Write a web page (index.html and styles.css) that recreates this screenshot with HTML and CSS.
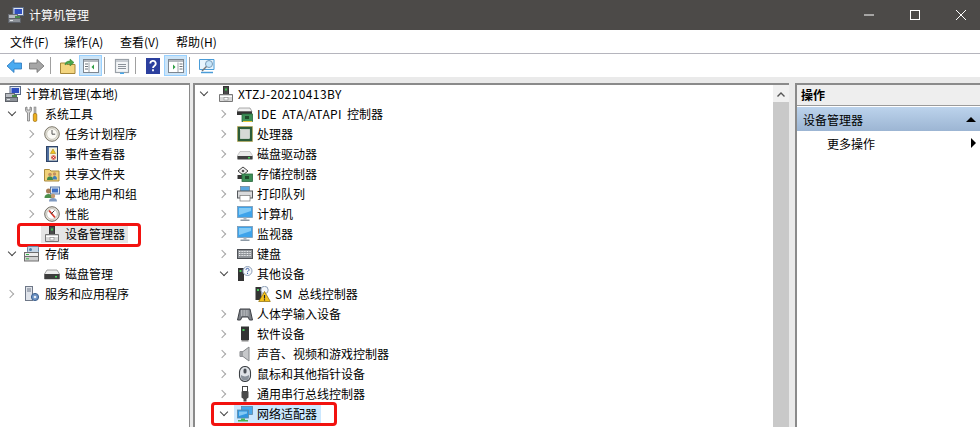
FILE: index.html
```html
<!DOCTYPE html>
<html lang="zh-CN">
<head>
<meta charset="utf-8">
<title>计算机管理</title>
<link rel="stylesheet" href="styles.css">
</head>
<body>
<svg class="sprites" xmlns="http://www.w3.org/2000/svg">
  <symbol id="i-mgmt" viewBox="0 0 16 16"><rect x="5" y="0.500" width="10.500" height="8" fill="#dfe6f2" stroke="#5a6a85"/><rect x="6.500" y="2" width="7.500" height="5" fill="#2f4fc0"/><rect x="0.500" y="7.500" width="9" height="4" fill="#b8bcc2" stroke="#6a6e75"/><rect x="0.500" y="11.500" width="12" height="4" fill="#8d9299" stroke="#5d6168"/><rect x="2" y="13" width="3" height="1" fill="#dfe2e6"/><rect x="7" y="9" width="5" height="2" fill="#4b8a4b"/></symbol>
  <symbol id="i-tools" viewBox="0 0 16 16"><path d="M1.500 1.500v2.500a3 3 0 0 0 2 2.700V15h2V6.700a3 3 0 0 0 2-2.700V1.500L6 1v3H3V1z" fill="#d5d5d5" stroke="#6c6c6c" stroke-width=".7"/><rect x="10" y="1" width="2" height="7" fill="#b9b9b9" stroke="#777" stroke-width=".5"/><rect x="9.300" y="7.500" width="3.500" height="8" rx="1.400" fill="#eeb01e" stroke="#9a6a08" stroke-width=".7"/></symbol>
  <symbol id="i-clock" viewBox="0 0 16 16"><circle cx="8" cy="8" r="7.300" fill="#e4e2da" stroke="#7b7668"/><circle cx="8" cy="8" r="5.300" fill="#fbfaf5" stroke="#b9b5a6" stroke-width=".6"/><path d="M8 4v4.200h3.200" fill="none" stroke="#555" stroke-width="1"/></symbol>
  <symbol id="i-event" viewBox="0 0 16 16"><rect x="2.500" y="0.500" width="11" height="15" fill="#4f6f9f" stroke="#2e4468"/><rect x="5" y="1.500" width="8" height="13" fill="#f4f1dd"/><path d="M9 3l2.600 4.500H6.400z" fill="#f1c21c" stroke="#a07c08" stroke-width=".5"/><circle cx="9.500" cy="11.500" r="2.300" fill="#d2453a"/><path d="M8.500 10.500l2 2m0-2l-2 2" stroke="#fff" stroke-width=".7"/></symbol>
  <symbol id="i-share" viewBox="0 0 16 16"><path d="M0.500 3.500h5l1.500 1.500h8v10h-14.500z" fill="#f1d27a" stroke="#a98a3c"/><circle cx="6" cy="8.500" r="1.800" fill="#c08f63"/><path d="M3 14c0-3 1.300-3.500 3-3.500s3 .5 3 3.500z" fill="#3f8a49"/><circle cx="10.500" cy="8" r="1.700" fill="#c08f63"/><path d="M8.500 13.500c0-3 .8-3.500 2-3.500s2.500.5 2.500 3.500z" fill="#3f7fb8"/></symbol>
  <symbol id="i-users" viewBox="0 0 16 16"><rect x="6.500" y="1" width="9" height="7" fill="#dbe6f5" stroke="#5d7aa8"/><rect x="8" y="2.500" width="6" height="4" fill="#3f6fc4"/><circle cx="4.500" cy="5" r="2.500" fill="#a77b55"/><path d="M0.500 12c0-3 1.800-4 4-4s4 1 4 4z" fill="#4c8f4c"/><circle cx="9" cy="10" r="2.200" fill="#c49a72"/><path d="M5 15.500c0-2.700 1.800-3.500 4-3.500s4 .8 4 3.500z" fill="#7f99bf"/></symbol>
  <symbol id="i-perf" viewBox="0 0 16 16"><circle cx="8" cy="8" r="7.300" fill="#e5e3dc" stroke="#6f6b62"/><circle cx="8" cy="8" r="5.300" fill="#fff" stroke="#a9a69c" stroke-width=".6"/><path d="M5 4.500L11 11.500" stroke="#d43c2d" stroke-width="1.800"/><path d="M10.500 4.500L7 8" stroke="#444" stroke-width="1"/></symbol>
  <symbol id="i-dev" viewBox="0 0 16 16"><rect x="5.500" y="0.500" width="5" height="8" fill="#4a4a4a" stroke="#333"/><rect x="7" y="2.500" width="2" height="2" fill="#3ac34a"/><path d="M1.500 8.500h13v7h-13z" fill="#d9d9d9" stroke="#777"/><path d="M2 10.500h12" stroke="#fff"/><rect x="6" y="11.500" width="4" height="2.500" fill="#fff" stroke="#888" stroke-width=".6"/></symbol>
  <symbol id="i-store" viewBox="0 0 16 16"><rect x="3.500" y="0.500" width="11" height="6" rx="1" fill="#c6d6e6" stroke="#6888a6"/><circle cx="6.500" cy="3.500" r="1.500" fill="#4d7ea8"/><rect x="0.500" y="6.500" width="14" height="4" fill="#ececec" stroke="#6f6f6f"/><rect x="2" y="8" width="3" height="1" fill="#39b54a"/><rect x="0.500" y="10.500" width="14" height="4.500" fill="#d1d1d1" stroke="#6f6f6f"/><rect x="2" y="12.300" width="3" height="1" fill="#39b54a"/></symbol>
  <symbol id="i-disk" viewBox="0 0 16 16"><path d="M3 4h10l2.500 4v5h-15V8z" fill="#ededed" stroke="#8b8b8b" stroke-width=".8"/><rect x="0.500" y="8" width="15" height="5" fill="#3d3d3d"/><rect x="11" y="10" width="2" height="1.500" fill="#47d35a"/></symbol>
  <symbol id="i-svc" viewBox="0 0 16 16"><rect x="1.500" y="0.500" width="7" height="14" fill="#dfe3ea" stroke="#6f7888"/><path d="M3 3h4M3 5h4" stroke="#6f7888"/><circle cx="11" cy="11" r="3.600" fill="#6e93c4" stroke="#3f628f"/><circle cx="11" cy="11" r="1.300" fill="#e8eef6"/></symbol>
  <symbol id="i-ide" viewBox="0 0 16 16"><path d="M2 2h11l2 3.500H0z" fill="#efefef" stroke="#888" stroke-width=".7"/><rect x="0" y="5.500" width="15" height="3.500" fill="#333"/><rect x="5" y="8" width="10.500" height="7.500" fill="#3d8f57" stroke="#2a6a3f" stroke-width=".8"/><rect x="8" y="10" width="4" height="3" fill="#1e4b2c"/><path d="M6 15.500h9" stroke="#e8c83a"/></symbol>
  <symbol id="i-cpu" viewBox="0 0 16 16"><rect x="0.500" y="0.500" width="15" height="15" fill="#2d5c38" stroke="#c9a93f" stroke-dasharray="1 1"/><rect x="1.500" y="1.500" width="13" height="13" fill="#2d5c38"/><rect x="3.500" y="3.500" width="9" height="9" fill="#d6dad6" stroke="#f4f4f4" stroke-width=".6"/></symbol>
  <symbol id="i-hd" viewBox="0 0 16 16"><path d="M3 5.500h10l2.500 4v3h-15v-3z" fill="#eaeaea" stroke="#aaa" stroke-width=".6"/><rect x="0.500" y="10" width="15" height="3.500" fill="#3f3f3f"/><rect x="11" y="11" width="2" height="1.500" fill="#47d35a"/></symbol>
  <symbol id="i-sctl" viewBox="0 0 16 16"><path d="M1 5l5-4 5 4-5 4z" fill="#f1f1f1" stroke="#444" stroke-width="1"/><circle cx="6" cy="5" r="1.300" fill="#555"/><rect x="0.500" y="9" width="8" height="4" fill="#333"/><rect x="5" y="8" width="10.500" height="7.500" fill="#3d8f57" stroke="#2a6a3f" stroke-width=".8"/><rect x="8" y="10" width="4" height="3" fill="#1e4b2c"/></symbol>
  <symbol id="i-print" viewBox="0 0 16 16"><rect x="3.500" y="0.500" width="9" height="5" fill="#5aa7df" stroke="#6b7f90" stroke-width=".7"/><rect x="0.500" y="5" width="15" height="7" fill="#d9dadc" stroke="#55585c"/><rect x="3" y="9.500" width="10" height="5.500" fill="#fff" stroke="#777" stroke-width=".7"/></symbol>
  <symbol id="i-pc" viewBox="0 0 16 16"><rect x="0.500" y="0.500" width="15" height="11" fill="#3ea3ea" stroke="#7a9ab5" stroke-width=".8"/><path d="M2 2h12v3L2 9z" fill="#a2dcfb" opacity=".7"/><path d="M6.500 11.500h3v2h-3z" fill="#a9b4bd"/><rect x="3.500" y="13.500" width="9" height="1.500" fill="#8c99a5"/></symbol>
  <symbol id="i-kbd" viewBox="0 0 16 16"><rect x="0.500" y="3.500" width="15" height="9" fill="#8f9398" stroke="#4e5156"/><path d="M2 5.500h12M2 7.500h12M2 9.500h12" stroke="#eceef0" stroke-width="1.100" stroke-dasharray="1 .6"/></symbol>
  <symbol id="i-other" viewBox="0 0 16 16"><rect x="1" y="2" width="6" height="13" fill="#333"/><rect x="2.500" y="4" width="2" height="2" fill="#49c95a"/><circle cx="10.500" cy="5" r="4.500" fill="#f4f7fb" stroke="#8ea0b8"/><path d="M9 3.800a1.500 1.500 0 1 1 2.200 1.300c-.5.300-.7.600-.7 1.100M10.500 7v1" fill="none" stroke="#3b5fa8"/></symbol>
  <symbol id="i-warn" viewBox="0 0 16 16"><rect x="0.500" y="1" width="6" height="13" fill="#333"/><rect x="2" y="3" width="2" height="2" fill="#49c95a"/><circle cx="9.500" cy="4" r="3.700" fill="#f4f7fb" stroke="#8ea0b8"/><path d="M9.500 5.500l5.800 10H3.700z" fill="#f5c21b" stroke="#8a6a08" stroke-width=".7"/><path d="M9.500 9v3.500M9.500 13.200v1.200" stroke="#222" stroke-width="1.200"/></symbol>
  <symbol id="i-hid" viewBox="0 0 16 16"><path d="M3 3h10l2.500 11h-3l-1.500-3h-6l-1.500 3h-3z" fill="#7c8086" stroke="#3e4146"/><path d="M4 5h8M4 7h8M4 9h8" stroke="#eef0f2" stroke-dasharray="1 .6"/></symbol>
  <symbol id="i-soft" viewBox="0 0 16 16"><rect x="4" y="0.500" width="8" height="13.500" fill="#333"/><rect x="5.500" y="3" width="2" height="2" fill="#49c95a"/><rect x="4.500" y="14" width="7" height="1.500" fill="#888"/></symbol>
  <symbol id="i-sound" viewBox="0 0 16 16"><path d="M3 5.500h3L12 1v14L6 10.500H3z" fill="#c6c8ca" stroke="#84878a"/><rect x="3" y="5.500" width="3" height="5" fill="#9b9ea1"/></symbol>
  <symbol id="i-mouse" viewBox="0 0 16 16"><rect x="2.500" y="0.500" width="11" height="15" rx="5.500" fill="#dfe3e8" stroke="#3c4045" stroke-width="1.100"/><rect x="6.500" y="2.500" width="3" height="5" rx="1.500" fill="#4b5056"/><path d="M4 9a7 7 0 0 0 8 0v1.500a4 4 0 0 1-8 0z" fill="#8a929b"/></symbol>
  <symbol id="i-usb" viewBox="0 0 16 16"><rect x="5.500" y="0.500" width="5" height="5" fill="#fff" stroke="#444"/><path d="M4.500 5.500h7v6l-2 1.500v2.500h-3V13l-2-1.500z" fill="#4a4a4a"/></symbol>
  <symbol id="i-net" viewBox="0 0 16 16"><rect x="4.500" y="0.500" width="11" height="8" fill="#49a8ea" stroke="#5f89a8" stroke-width=".8"/><rect x="0.500" y="4" width="11" height="8" fill="#2f95e0" stroke="#5f89a8" stroke-width=".8"/><path d="M2 5.500h8v2l-8 2.500z" fill="#a6defb" opacity=".7"/><path d="M4 12.500h4v1.500h3v1.500H1V14h3z" fill="#49b356"/></symbol>
  <symbol id="t-back" viewBox="0 0 16 16"><path d="M1 8l7-6.500V5h7.500v6H8v3.500z" fill="#49aaf0" stroke="#2a76bd" stroke-width=".8"/></symbol>
  <symbol id="t-fwd" viewBox="0 0 16 16"><path d="M15 8L8 1.500V5H.5v6H8v3.500z" fill="#a6a6a6" stroke="#6e6e6e" stroke-width=".8"/></symbol>
  <symbol id="t-up" viewBox="0 0 16 16"><path d="M0.500 5h5l1.500 1.500h8v9H.5z" fill="#f3d57f" stroke="#a5873a"/><path d="M5 7c0-3 2-4 5-4V1l4 3.500L10 8V5.500C8 5.500 6 6 5 7z" fill="#49a84a" stroke="#2f7a31" stroke-width=".5"/></symbol>
  <symbol id="t-tree" viewBox="0 0 16 16"><rect x="0.500" y="1.500" width="15" height="13" fill="#fff" stroke="#7d8690"/><rect x="1" y="2" width="14" height="2" fill="#b5bac0"/><path d="M6 4.500v9.500" stroke="#9aa1a8"/><path d="M2 6h3M2 8.500h3M2 11h3" stroke="#6d747b"/><path d="M11 6.500L8.500 9l2.500 2.500z" fill="#2f9e44"/></symbol>
  <symbol id="t-tree2" viewBox="0 0 16 16"><rect x="0.500" y="1.500" width="15" height="13" fill="#fff" stroke="#7d8690"/><rect x="1" y="2" width="14" height="2" fill="#b5bac0"/><path d="M10 4.500v9.500" stroke="#9aa1a8"/><path d="M11.500 6h3M11.500 8.500h3M11.500 11h3" stroke="#6d747b"/><path d="M5 6.500L7.500 9 5 11.500z" fill="#2f9e44"/></symbol>
  <symbol id="t-list" viewBox="0 0 16 16"><rect x="1.500" y="1.500" width="13" height="13" fill="#f3f5f7" stroke="#9aa1a8" stroke-width="1.200"/><rect x="2" y="2" width="12" height="2" fill="#c7ccd2"/><path d="M4 6.500h8M4 8.500h8M4 10.500h8" stroke="#8b929a"/><rect x="6" y="14.500" width="4" height="1.500" fill="#49a8ea"/></symbol>
  <symbol id="t-mon" viewBox="0 0 16 16"><path d="M.500 1.500h14.500v10H.500z" fill="#e9f5fd" stroke="#4a9cd8"/><circle cx="10" cy="6" r="3.500" fill="#c8e6fa" stroke="#7a9ab5"/><path d="M7.500 8.500L3 13" stroke="#777" stroke-width="1.400"/><path d="M2 14.500h12" stroke="#4a9cd8" stroke-width="1.500"/></symbol>
</svg>

<div class="window">
  <header class="titlebar">
    <svg class="ico title-ico"><use href="#i-mgmt"/></svg>
    <span class="title">计算机管理</span>
    <div class="controls">
      <svg class="ctl" viewBox="0 0 12 12"><path d="M1 6h10" stroke="#fff"/></svg>
      <svg class="ctl" viewBox="0 0 12 12"><rect x="1.500" y="1.500" width="9" height="9" fill="none" stroke="#fff"/></svg>
      <svg class="ctl" viewBox="0 0 12 12"><path d="M1 1l10 10M11 1L1 11" stroke="#fff"/></svg>
    </div>
  </header>

  <nav class="menubar">
    <span class="menu first">文件(F)</span>
    <span class="menu">操作(A)</span>
    <span class="menu">查看(V)</span>
    <span class="menu">帮助(H)</span>
  </nav>

  <div class="toolbar">
    <span class="tool"><svg class="ico"><use href="#t-back"/></svg></span>
    <span class="tool"><svg class="ico"><use href="#t-fwd"/></svg></span>
    <span class="sep"></span>
    <span class="tool"><svg class="ico"><use href="#t-up"/></svg></span>
    <span class="tool on"><svg class="ico"><use href="#t-tree"/></svg></span>
    <span class="sep"></span>
    <span class="tool"><svg class="ico"><use href="#t-list"/></svg></span>
    <span class="sep"></span>
    <span class="tool"><svg class="help" viewBox="0 0 14 16"><rect width="14" height="16" fill="#2b3f9e"/><path d="M4.300 5.500a2.700 2.700 0 1 1 4 2.400C7.400 8.500 7 9 7 10M7 11.300v2" fill="none" stroke="#fff" stroke-width="1.800"/></svg></span>
    <span class="tool on"><svg class="ico"><use href="#t-tree2"/></svg></span>
    <span class="sep"></span>
    <span class="tool"><svg class="ico"><use href="#t-mon"/></svg></span>
  </div>

  <main class="panes">
    <section class="pane left">
      <div class="rows">
      <div class="row l0"><span class="arr"></span><svg class="ico"><use href="#i-mgmt"/></svg><span class="lbl">计算机管理(本地)</span></div>
      <div class="row l1"><span class="arr open"></span><svg class="ico"><use href="#i-tools"/></svg><span class="lbl">系统工具</span></div>
      <div class="row l2"><span class="arr shut"></span><svg class="ico"><use href="#i-clock"/></svg><span class="lbl">任务计划程序</span></div>
      <div class="row l2"><span class="arr shut"></span><svg class="ico"><use href="#i-event"/></svg><span class="lbl">事件查看器</span></div>
      <div class="row l2"><span class="arr shut"></span><svg class="ico"><use href="#i-share"/></svg><span class="lbl">共享文件夹</span></div>
      <div class="row l2"><span class="arr shut"></span><svg class="ico"><use href="#i-users"/></svg><span class="lbl">本地用户和组</span></div>
      <div class="row l2"><span class="arr shut"></span><svg class="ico"><use href="#i-perf"/></svg><span class="lbl">性能</span></div>
      <div class="row l2 grey"><span class="arr"></span><svg class="ico"><use href="#i-dev"/></svg><span class="lbl">设备管理器</span><span class="mark mark-a"></span></div>
      <div class="row l1"><span class="arr open"></span><svg class="ico"><use href="#i-store"/></svg><span class="lbl">存储</span></div>
      <div class="row l2"><span class="arr"></span><svg class="ico"><use href="#i-disk"/></svg><span class="lbl">磁盘管理</span></div>
      <div class="row l1"><span class="arr shut"></span><svg class="ico"><use href="#i-svc"/></svg><span class="lbl">服务和应用程序</span></div>
      </div>
    </section>

    <section class="pane center">
      <div class="rows tree">
        <div class="row l0c"><span class="arr open"></span><svg class="ico"><use href="#i-dev"/></svg><span class="lbl lat">XTZJ-20210413BY</span></div>
        <div class="row l1c"><span class="arr shut"></span><svg class="ico"><use href="#i-ide"/></svg><span class="lbl"><span class="lat">IDE ATA/ATAPI </span>控制器</span></div>
        <div class="row l1c"><span class="arr shut"></span><svg class="ico"><use href="#i-cpu"/></svg><span class="lbl">处理器</span></div>
        <div class="row l1c"><span class="arr shut"></span><svg class="ico"><use href="#i-hd"/></svg><span class="lbl">磁盘驱动器</span></div>
        <div class="row l1c"><span class="arr shut"></span><svg class="ico"><use href="#i-sctl"/></svg><span class="lbl">存储控制器</span></div>
        <div class="row l1c"><span class="arr shut"></span><svg class="ico"><use href="#i-print"/></svg><span class="lbl">打印队列</span></div>
        <div class="row l1c"><span class="arr shut"></span><svg class="ico"><use href="#i-pc"/></svg><span class="lbl">计算机</span></div>
        <div class="row l1c"><span class="arr shut"></span><svg class="ico"><use href="#i-pc"/></svg><span class="lbl">监视器</span></div>
        <div class="row l1c"><span class="arr shut"></span><svg class="ico"><use href="#i-kbd"/></svg><span class="lbl">键盘</span></div>
        <div class="row l1c"><span class="arr open"></span><svg class="ico"><use href="#i-other"/></svg><span class="lbl">其他设备</span></div>
        <div class="row l2c"><span class="arr"></span><svg class="ico"><use href="#i-warn"/></svg><span class="lbl"><span class="lat">SM </span>总线控制器</span></div>
        <div class="row l1c"><span class="arr shut"></span><svg class="ico"><use href="#i-hid"/></svg><span class="lbl">人体学输入设备</span></div>
        <div class="row l1c"><span class="arr shut"></span><svg class="ico"><use href="#i-soft"/></svg><span class="lbl">软件设备</span></div>
        <div class="row l1c"><span class="arr shut"></span><svg class="ico"><use href="#i-sound"/></svg><span class="lbl">声音、视频和游戏控制器</span></div>
        <div class="row l1c"><span class="arr shut"></span><svg class="ico"><use href="#i-mouse"/></svg><span class="lbl">鼠标和其他指针设备</span></div>
        <div class="row l1c"><span class="arr shut"></span><svg class="ico"><use href="#i-usb"/></svg><span class="lbl">通用串行总线控制器</span></div>
        <div class="row l1c blue"><span class="arr open"></span><svg class="ico"><use href="#i-net"/></svg><span class="lbl">网络适配器</span><span class="mark mark-b"></span></div>
      </div>
      <div class="scrollbar"><svg class="up" viewBox="0 0 8 5"><path d="M.5 4.500L4 1l3.500 3.500" fill="none" stroke="#555" stroke-width="1.400"/></svg></div>
    </section>

    <aside class="pane right">
      <div class="act-head">操作</div>
      <div class="act-sec"><span>设备管理器</span><i class="tri-up"></i></div>
      <div class="act-item"><span>更多操作</span><i class="tri-right"></i></div>
    </aside>
  </main>
</div>
</body>
</html>
```
FILE: styles.css
```css
html, body { margin: 0; padding: 0; height: 100%; overflow: hidden; background: #fff; }
body { font-family: "Noto Sans CJK SC", "Noto Sans", sans-serif; font-size: 12px; color: #000; }
.sprites { width: 0; height: 0; position: absolute; }
.window { display: flex; flex-direction: column; height: 427px; width: 980px; }

.titlebar { height: 30px; background: #4c4a48; display: flex; align-items: center; padding-left: 8px; flex: none; }
.title { color: #fff; font-size: 12px; margin-left: 5px; padding-bottom: 2px; }
.controls { margin-left: auto; display: flex; }
.ctl { width: 12px; height: 12px; margin-left: 34px; }
.controls .ctl:last-child { margin-right: 13px; }

.ico { width: 16px; height: 16px; flex: none; display: block; }
.help { width: 14px; height: 16px; display: block; }

.menubar { height: 23px; display: flex; align-items: center; padding-left: 10px; border-bottom: 1px solid #b5b5bd; flex: none; }
.menu { line-height: 18px; width: 56px; white-space: nowrap; flex: none; }
.menu.first { width: 54px; }

.toolbar { height: 23px; display: flex; align-items: center; padding-left: 2px; flex: none; }
.tool { width: 23px; height: 21px; display: flex; align-items: center; justify-content: center; box-sizing: border-box; }
.tool.on { background: #cce4f7; border: 1px solid #99d1ff; }
.sep { width: 1px; height: 17px; background: #a0a0a0; margin: 0 5px 0 2px; }

.panes { flex: 1; min-height: 0; display: flex; background: #eaeaea; padding-top: 6px; gap: 3px; }
.pane { background: #fff; border-left: 2px solid #8a8a8a; border-top: 2px solid #8a8a8a; box-sizing: border-box; }
.left { width: 190px; border-left: 0; border-right: 1px solid #8a8a8a; flex: none; }
.center { width: 596px; display: flex; flex: none; }
.right { flex: 1; margin-left: 3px; }

.rows { margin-top: -1px; }
.tree { flex: 1; }
.row { height: 20px; display: flex; align-items: center; position: relative; white-space: nowrap; }
.arr { width: 14px; height: 20px; flex: none; position: relative; display: block; }
.arr.open::before, .arr.shut::before { content: ""; position: absolute; width: 6px; height: 6px; border-right: 1.6px solid #888; border-bottom: 1.6px solid #888; box-sizing: border-box; }
.arr.open::before { left: 3px; top: 5px; transform: rotate(45deg); border-color: #444; }
.arr.shut::before { left: 1px; top: 7px; transform: rotate(-45deg); border-color: #a6a6a6; }
.lbl { line-height: 18px; padding: 0 3px 0 5px; }
.tree .lbl { padding: 0 4px 0 4px; }
.lat { letter-spacing: .4px; word-spacing: 2px; }

.l0 { padding-left: 5px; }
.l0 .arr { display: none; }
.l1 { padding-left: 6px; }
.l1 .arr { width: 18px; }
.l2 { padding-left: 26px; }
.l2 .arr { width: 18px; }
.l0c { padding-left: 3px; }
.l0c .arr { width: 20px; }
.l1c { padding-left: 23px; }
.l1c .arr { width: 19px; }
.l2c { padding-left: 41px; }
.l2c .arr { width: 19px; }

.grey .lbl, .grey .ico { background: #e5e5e5; }
.blue .lbl, .blue .ico { background: #cce8ff; }
.grey .ico, .blue .ico { padding: 1px 0 1px 3px; margin-left: -3px; }

.mark { position: absolute; border: 3px solid #f2120f; border-radius: 4px; box-sizing: border-box; pointer-events: none; }
.mark-a { left: 17px; top: -1px; width: 124px; height: 24px; }
.mark-b { left: 16px; top: -2px; width: 126px; height: 24px; }

.scrollbar { width: 16px; background: #c9c9c9; flex: none; position: relative; }
.up { display: block; width: 8px; height: 5px; position: absolute; left: 4px; top: 7px; }
.scrollbar::before { content: ""; display: block; height: 17px; background: #f0f0f0; }

.act-head { height: 20px; background: #eeeeee; font-weight: 700; line-height: 20px; padding-left: 4px; border-bottom: 1px solid #9a9a9a; margin-bottom: 1px; }
.act-sec { height: 24px; background: linear-gradient(#bcd3ec, #9cb5d3); display: flex; align-items: center; justify-content: space-between; padding: 0 4px 0 6px; }
.act-item { height: 24px; display: flex; align-items: center; justify-content: space-between; padding: 0 4px 0 30px; }
.tri-up { width: 0; height: 0; border: 5px solid transparent; border-top: 0; border-bottom: 5px solid #000; }
.tri-right { width: 0; height: 0; border: 5px solid transparent; border-right: 0; border-left: 5px solid #000; }
```
